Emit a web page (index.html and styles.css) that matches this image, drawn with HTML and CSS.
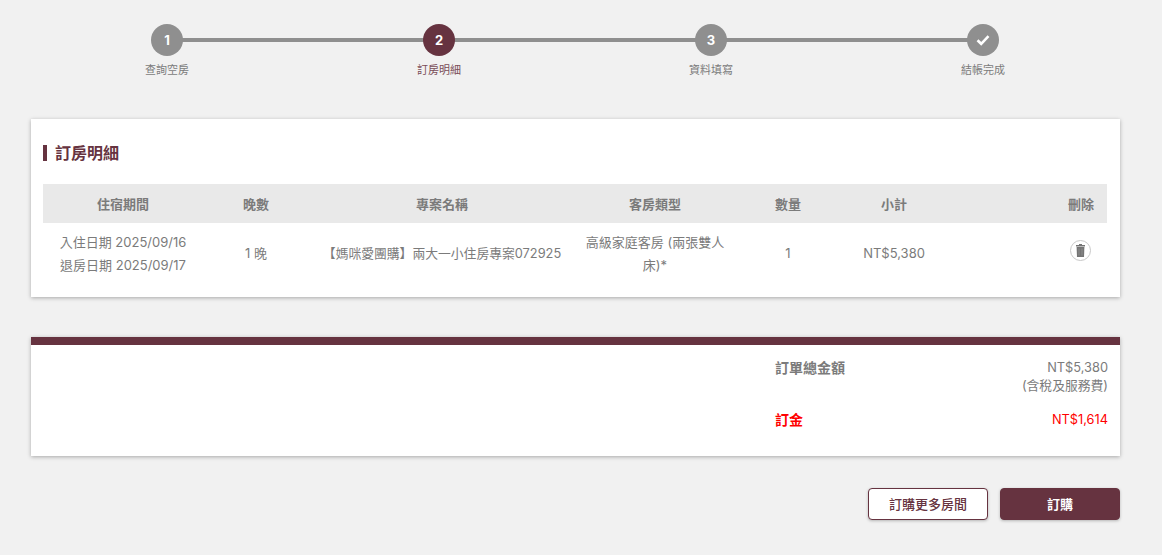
FILE: index.html
```html
<!DOCTYPE html>
<html lang="zh-Hant">
<head>
<meta charset="UTF-8">
<title>訂房明細</title>
<link rel="stylesheet" href="styles.css">
</head>
<body>

<div class="page">

  <ol class="stepper">
    <li class="step">
      <span class="step-dot">1</span>
      <span class="step-label">查詢空房</span>
    </li>
    <li class="step active">
      <span class="step-dot">2</span>
      <span class="step-label">訂房明細</span>
    </li>
    <li class="step">
      <span class="step-dot">3</span>
      <span class="step-label">資料填寫</span>
    </li>
    <li class="step">
      <span class="step-dot">
        <svg class="check-icon" viewBox="0 0 14 12" width="14" height="12">
          <path d="M1.5 6.2 L5.2 9.8 L12.5 2.2" fill="none" stroke="#fff" stroke-width="2.6"/>
        </svg>
      </span>
      <span class="step-label">結帳完成</span>
    </li>
  </ol>

  <section class="card detail-card">
    <h2 class="card-title">訂房明細</h2>
    <table class="booking-table">
      <thead>
        <tr>
          <th class="col-wide">住宿期間</th>
          <th class="col-small">晚數</th>
          <th class="col-name">專案名稱</th>
          <th class="col-wide">客房類型</th>
          <th class="col-small">數量</th>
          <th class="col-small">小計</th>
          <th class="col-wide col-delete">刪除</th>
        </tr>
      </thead>
      <tbody>
        <tr>
          <td>入住日期 2025/09/16<br>退房日期 2025/09/17</td>
          <td>1 晚</td>
          <td class="plan-name">【媽咪愛團購】兩大一小住房專案072925</td>
          <td>高級家庭客房 (兩張雙人床)*</td>
          <td>1</td>
          <td>NT$5,380</td>
          <td class="col-delete">
            <button class="delete-btn" type="button" aria-label="刪除">
              <svg viewBox="0 0 9 13" width="9" height="13">
                <path d="M3 0 H6 V1 H9 V2.4 H0 V1 H3 Z" fill="#747474"/>
                <path d="M0.6 3 H8.4 L8 13 H1 Z" fill="#747474"/>
                <path d="M3 4.5 V11.5 M6 4.5 V11.5" stroke="#9a9a9a" stroke-width="0.7"/>
              </svg>
            </button>
          </td>
        </tr>
      </tbody>
    </table>
  </section>

  <section class="card summary-card">
    <div class="summary-row">
      <span class="summary-label">訂單總金額</span>
      <span class="summary-value">NT$5,380<br>(含稅及服務費)</span>
    </div>
    <div class="summary-row deposit">
      <span class="summary-label">訂金</span>
      <span class="summary-value">NT$1,614</span>
    </div>
  </section>

  <div class="actions">
    <button class="btn btn-outline" type="button">訂購更多房間</button>
    <button class="btn btn-solid" type="button">訂購</button>
  </div>

</div>

</body>
</html>
```

FILE: styles.css
```css
body {
  margin: 0;
  padding: 0;
  background-color: #f1f1f1;
  font-family: Inter, "Noto Sans CJK TC", sans-serif;
  color: #7b7b7b;
  height: 555px;
  overflow: hidden;
}

.page {
  width: 1089px;
  margin-left: 31px;
  padding-top: 24px;
}

/* stepper */
.stepper {
  display: grid;
  grid-template-columns: repeat(4, 272px);
  list-style: none;
  margin: 0 0 42px;
  padding: 0;
}

.step {
  position: relative;
  display: flex;
  flex-direction: column;
  align-items: center;
}

.step:not(:last-child)::after {
  content: "";
  position: absolute;
  top: 14px;
  left: 50%;
  width: 100%;
  height: 4px;
  background: #8f8f8f;
}

.step-dot {
  position: relative;
  z-index: 1;
  display: flex;
  align-items: center;
  justify-content: center;
  width: 32px;
  height: 32px;
  border-radius: 50%;
  background: #8f8f8f;
  color: white;
  font-size: 13px;
  font-weight: 700;
}

.step-label {
  margin-top: 7px;
  font-size: 11px;
  line-height: 14px;
  color: #7b7b7b;
}

.step.active .step-dot {
  background: #663340;
}

.step.active .step-label {
  color: #7a4d58;
}

/* cards */
.card {
  background: white;
  box-shadow: 0 1px 4px rgba(0, 0, 0, 0.3);
}

.detail-card {
  padding: 26px 13px 14px 12px;
  margin-bottom: 40px;
}

.card-title {
  margin: 0 0 23px;
  padding-left: 8px;
  border-left: 4px solid #663340;
  font-size: 16px;
  line-height: 16px;
  font-weight: 700;
  color: #663340;
}

.booking-table {
  width: 1064px;
  table-layout: fixed;
  border-collapse: collapse;
  font-size: 13px;
  text-align: center;
}

.booking-table th,
.booking-table td {
  box-sizing: border-box;
}

.booking-table th {
  height: 39px;
  padding: 0 0 1px;
  background: #e9e9e9;
  font-size: 13px;
  font-weight: 700;
  color: #7b7b7b;
}

.booking-table td {
  height: 60px;
  padding: 1px 8px 0;
  line-height: 23px;
}

.booking-table .plan-name {
  font-size: 12.8px;
}

.col-wide { width: 160px; }
.col-small { width: 106px; }
.col-name { width: 266px; }

.booking-table .col-delete {
  padding-right: 13px;
  text-align: right;
}

.booking-table td.col-delete {
  padding-right: 16px;
  padding-bottom: 7px;
}

.delete-btn {
  display: inline-flex;
  align-items: center;
  justify-content: center;
  width: 21px;
  height: 21px;
  padding: 0;
  border: 1px solid #c8c8c8;
  border-radius: 50%;
  background: white;
  vertical-align: middle;
  cursor: pointer;
}

.summary-card {
  border-top: 8px solid #663340;
  padding: 14px 12px 0 744px;
  height: 97px;
}

.summary-row {
  display: flex;
  justify-content: space-between;
  align-items: flex-start;
}

.summary-label {
  font-size: 14px;
  line-height: 18px;
  font-weight: 700;
}

.summary-value {
  font-size: 12.8px;
  line-height: 18px;
  text-align: right;
}

.deposit {
  margin-top: 16px;
  color: #ff0000;
}

/* buttons */
.actions {
  display: flex;
  justify-content: flex-end;
  gap: 12px;
  margin-top: 32px;
}

.btn {
  width: 120px;
  height: 32px;
  padding: 0 0 2px;
  border-radius: 4px;
  font-family: inherit;
  font-size: 13px;
  font-weight: 500;
  box-shadow: 0 1px 3px rgba(0, 0, 0, 0.25);
  cursor: pointer;
}

.btn-outline {
  background: white;
  border: 1px solid #663340;
  color: #663340;
}

.btn-solid {
  background: #663340;
  border: 1px solid #663340;
  color: white;
  font-weight: 700;
}
```
